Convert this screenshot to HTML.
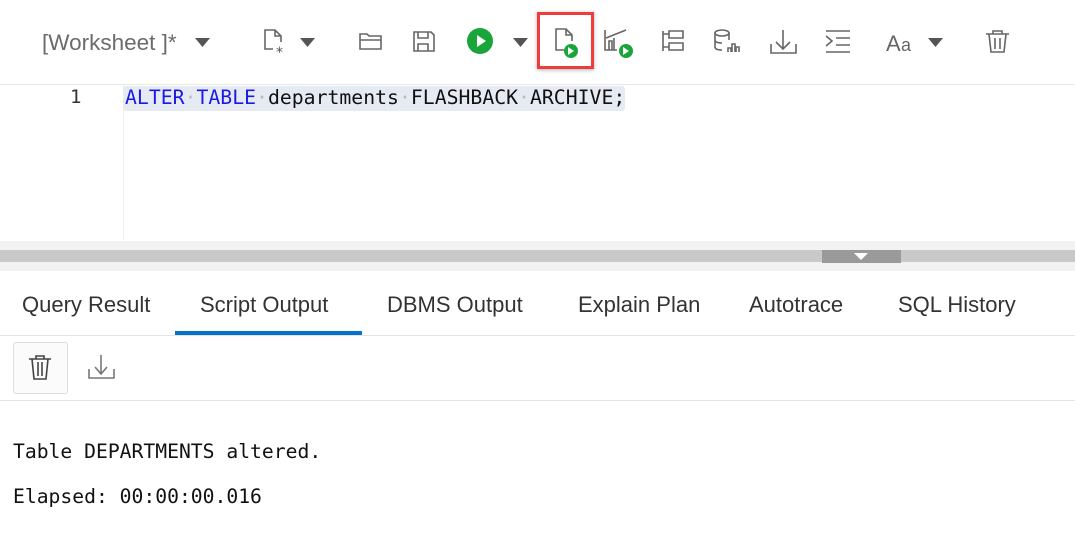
<!DOCTYPE html>
<html><head><style>
*{margin:0;padding:0;box-sizing:border-box}
body{width:1075px;height:549px;background:#fff;position:relative;overflow:hidden;font-family:"Liberation Sans",sans-serif}
.a{position:absolute}
.mono{font-family:"DejaVu Sans Mono","Liberation Mono",monospace}
svg{position:absolute;overflow:visible}
.tab{position:absolute;top:292px;font-size:22px;color:#333;white-space:nowrap}
</style></head><body>
<div class="a" style="left:42px;top:30px;font-size:22.5px;color:#6b6b6b">[Worksheet ]*</div>
<svg style="left:0;top:0" width="1075" height="84" fill="none" stroke="#666" stroke-width="1.6">
<path d="M195 38h15l-7.5 9z" fill="#555" stroke="none"/>
<path d="M273 49h-8V30h10l6 6v6 M275 30v6h6" />
<text x="276" y="57" font-size="14" fill="#555" stroke="none" font-family="DejaVu Sans">*</text>
<path d="M300 38h15l-7.5 9z" fill="#555" stroke="none"/>
<path d="M360 49V34h7l2 2h12v13z M360 40h21"/>
<path d="M414 32h17l3 3v16h-20z M418 32v6h10v-6 M418 51v-7h10v7"/>
<circle cx="480" cy="41" r="13" fill="#1aa53a" stroke="none"/>
<path d="M477 35v12l9-6z" fill="#fff" stroke="none"/>
<path d="M513 38h15l-7.5 9z" fill="#555" stroke="none"/>
<path d="M564 50h-8V29h10l6 6v6 M566 29v6h6"/>
<circle cx="571" cy="51" r="7" fill="#1aa53a" stroke="none"/>
<path d="M568 47v8l6-4z" fill="#fff" stroke="none"/>
<path d="M605 30v20h12 M609 50v-9h3v9 M614 50v-12 M606 38l20-8"/>
<circle cx="626" cy="51" r="7" fill="#1aa53a" stroke="none"/>
<path d="M623 47v8l6-4z" fill="#fff" stroke="none"/>
<path d="M663 31v20 M663 34h6 M663 47h6 M669 31h14v7h-14z M669 43h14v7h-14z"/>
<ellipse cx="722" cy="33" rx="7" ry="3"/><path d="M715 33v14c0 2 3 3 7 3 M729 33v7 M715 40c0 2 3 3 7 3"/>
<path d="M728 52v-4h3v4 M732 52v-8h3v8 M736 52v-5h3v5"/>
<path d="M771 44v9h25v-9 M783 30v19 M776 42l7 7 7-7"/>
<path d="M826 31h24 M826 52h24 M836 38h14 M836 45h14 M826 36l6 5-6 5"/>
<text x="886" y="51" font-size="22" fill="#666" stroke="none" font-family="Liberation Sans">A</text>
<text x="901" y="51" font-size="18" fill="#666" stroke="none" font-family="Liberation Sans">a</text>
<path d="M928 38h15l-7.5 9z" fill="#555" stroke="none"/>
<path d="M986 34h23 M993 34v-3h9v3 M989 34l2 18h13l2-18 M995 38v11 M1000 38v11"/>
</svg>
<div class="a" style="left:537px;top:12px;width:57px;height:57px;border:3px solid #ee3c3c;box-shadow:0 1px 4px rgba(0,0,0,.3)"></div>
<div class="a" style="left:0;top:84px;width:1075px;height:1px;background:#e8e8e8"></div>
<div class="a" style="left:123px;top:85px;width:1px;height:155px;background:#eee"></div>
<div class="a mono" style="left:70px;top:86px;font-size:19px;color:#333">1</div>
<div class="a mono" style="left:123px;top:86px;width:502px;height:25px;background:#e6ebf3;border-radius:3px"></div>
<div class="a mono" style="left:125px;top:86px;font-size:19.8px;color:#111;white-space:pre"><span style="color:#1a1ae6">ALTER</span><span style="color:#bbb">·</span><span style="color:#1a1ae6">TABLE</span><span style="color:#bbb">·</span>departments<span style="color:#bbb">·</span>FLASHBACK<span style="color:#bbb">·</span>ARCHIVE;</div>
<div class="a" style="left:0;top:241px;width:1075px;height:30px;background:#f2f2f2"></div>
<div class="a" style="left:0;top:250px;width:1075px;height:12px;background:#c9c9c9"></div>
<div class="a" style="left:822px;top:250px;width:79px;height:13px;background:#9a9a9a"></div>
<svg style="left:854px;top:253px" width="14" height="8"><path d="M0 0h14L7 7z" fill="#fff"/></svg>
<div class="tab" style="left:22px">Query Result</div>
<div class="tab" style="left:200px">Script Output</div>
<div class="tab" style="left:387px">DBMS Output</div>
<div class="tab" style="left:578px">Explain Plan</div>
<div class="tab" style="left:749px">Autotrace</div>
<div class="tab" style="left:898px">SQL History</div>
<div class="a" style="left:175px;top:331px;width:187px;height:4px;background:#0572ce"></div>
<div class="a" style="left:0;top:335px;width:1075px;height:1px;background:#e4e4e4"></div>
<div class="a" style="left:13px;top:342px;width:55px;height:52px;border:1px solid #ddd;border-radius:3px;background:#fbfbfb"></div>
<svg style="left:0;top:0" width="1075" height="549" fill="none" stroke="#444" stroke-width="1.6">
<path d="M29 359h22 M36 359v-3h8v3 M32 359l2 20h12l2-20 M38 362v14 M42 362v14"/>
<path d="M89 369v9h25v-9 M101 355v19 M95 367l6 7 6-7" stroke="#777"/>
</svg>
<div class="a" style="left:0;top:400px;width:1075px;height:1px;background:#e4e4e4"></div>
<div class="a mono" style="left:13px;top:440px;font-size:19.7px;color:#111;white-space:pre">Table DEPARTMENTS altered.</div>
<div class="a mono" style="left:13px;top:485px;font-size:19.7px;color:#111;white-space:pre">Elapsed: 00:00:00.016</div>
</body></html>
